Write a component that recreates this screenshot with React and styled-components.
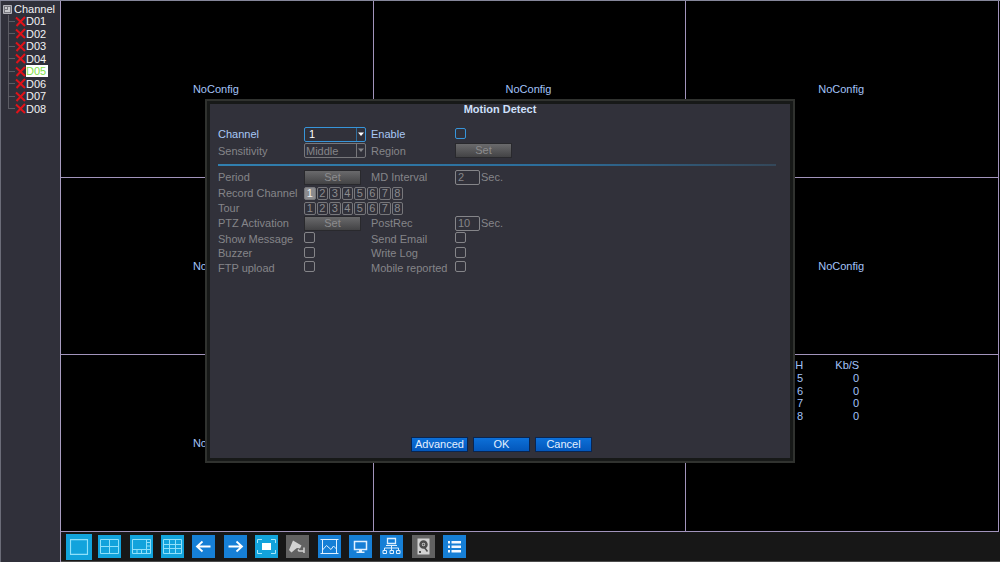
import { useState } from "react";
import styled, { createGlobalStyle } from "styled-components";

const GlobalStyle = createGlobalStyle`
  * {
    box-sizing: border-box;
  }

  body {
    margin: 0;
    background: #000;
    color: #a3c3f8;
    font-family: "Liberation Sans", Arial, sans-serif;
    font-size: 11px;
    line-height: 12px;
  }

  button,
  input,
  select {
    margin: 0;
    padding: 0;
    border: 0;
    background: none;
    color: inherit;
    font: inherit;
  }
`;

const Screen = styled.div`
  display: flex;
  min-height: 100vh;
  border-top: 1px solid #85869a;
`;

const Sidebar = styled.nav`
  flex: 0 0 60px;
  padding-top: 2px;
  border-left: 1px solid #6b6c78;
  background: #30303a;
  color: #f2f2f4;
`;

const TreeRoot = styled.div`
  display: flex;
  align-items: center;
  gap: 2px;
  padding-left: 2px;
`;

const Tree = styled.ul`
  display: grid;
  grid-auto-rows: 1fr;
  height: 100px;
  margin: 0;
  padding: 0 0 0 7px;
  list-style: none;
`;

const TreeItem = styled.li`
  display: flex;
  align-items: center;
`;

const Branch = styled.span`
  align-self: stretch;
  width: 7px;
  background:
    linear-gradient(#5c5c64, #5c5c64) left top / 1px
      ${(props) => (props.$last ? "50%" : "100%")} no-repeat,
    linear-gradient(#5c5c64, #5c5c64) left center / 100% 1px no-repeat;
`;

const CameraName = styled.button`
  height: 12px;
  padding-right: 2px;
  background: ${(props) => (props.$selected ? "#fff" : "none")};
  color: ${(props) => (props.$selected ? "#7fe04a" : "inherit")};
`;

const Main = styled.main`
  flex: 1;
  display: flex;
  flex-direction: column;
  border-left: 1px solid #a89cc0;
`;

const Wall = styled.div`
  flex: 1;
  display: grid;
  grid-template-columns: repeat(3, 1fr);
  grid-template-rows: repeat(3, 1fr);
  padding-right: 1px;
`;

const View = styled.div`
  display: grid;
  place-items: center;
  padding-right: 2px;
  border-right: 1px solid #a294bc;
  border-bottom: 1px solid #a294bc;
`;

const Rates = styled.table`
  place-self: start;
  height: 65px;
  margin: 2px 0 0 101px;
  border-collapse: collapse;
  text-align: right;

  th {
    height: 15px;
    font-weight: normal;
  }

  th,
  td {
    padding: 0;
  }

  th + th {
    width: 56px;
  }
`;

const Toolbar = styled.div`
  display: flex;
  height: 30px;
  padding-left: 2px;
  border-bottom: 1px solid #4b4b4b;
  background: #171717;
`;

const Tools = styled.div`
  display: grid;
  grid-template-columns: repeat(13, 1fr);
  width: 407px;
  place-items: center;
`;

const Tool = styled.button`
  width: ${(props) => (props.$active ? "26px" : "23px")};
  height: ${(props) => (props.$active ? "26px" : "23px")};
  background: ${(props) => props.$color};

  svg {
    display: block;
    width: 100%;
    height: 100%;
  }
`;

const Overlay = styled.div`
  position: fixed;
  inset: 0;
  display: grid;
  place-items: center;
`;

const Dialog = styled.section`
  display: flex;
  flex-direction: column;
  width: 59%;
  min-width: 400px;
  min-height: 364px;
  padding: 2px 0 9px;
  border: 2px solid #30322f;
  background: #31313a;
  box-shadow: inset 0 0 0 3px #171918;
`;

const Title = styled.h1`
  margin: 0 0 11px;
  color: #cfe0fb;
  font-size: 11px;
  font-weight: bold;
  line-height: 12px;
  text-align: center;
`;

const Form = styled.div`
  display: grid;
  grid-template-columns: 86px 67px 84px 1fr;
  grid-template-rows: ${(props) => props.$rows};
  align-items: center;
  justify-items: start;
  margin: 0 17px 0 11px;
  color: #858589;
  white-space: nowrap;
`;

const Label = styled.label`
  color: ${(props) => (props.$active ? "#a9c8f6" : "inherit")};
`;

const Divider = styled.hr`
  height: 2px;
  margin: 5px 17px 3px 11px;
  border: 0;
  background: linear-gradient(90deg, #3180b0, #2c6d9a 60%, #344759);
`;

const SelectBox = styled.span`
  display: flex;
  width: 62px;
  height: 15px;
  border: 1px solid ${(props) => (props.$active ? "#3795da" : "#77777b")};
  border-radius: 2px;
  color: ${(props) => (props.$active ? "#fff" : "inherit")};

  select {
    flex: 1;
    min-width: 0;
    padding-left: ${(props) => (props.$active ? "4px" : "1px")};
    appearance: none;
    opacity: 1;
  }

  svg {
    width: 9px;
    height: 13px;
    border-left: 1px solid ${(props) => (props.$active ? "#2f6d9c" : "#77777b")};
    pointer-events: none;
  }
`;

const CheckBox = styled.input`
  && {
    width: 11px;
    height: 11px;
    margin-bottom: 2px;
    border: 1px solid ${(props) => (props.$active ? "#3795da" : "#858589")};
    border-radius: 2px;
    appearance: none;
  }

  &:checked {
    background: #2f86c4;
  }
`;

const SetButton = styled.button`
  width: 57px;
  height: 15px;
  border: 1px solid #29292d;
  background: linear-gradient(#6a6a6c, #434345);
  color: #8c8c8e;
  line-height: 13px;
`;

const NumberField = styled.span`
  display: flex;
  align-items: center;
  gap: 1px;

  input {
    width: 25px;
    height: 15px;
    padding-left: 2px;
    border: 1px solid #858589;
    border-radius: 2px;
  }
`;

const ChannelKeys = styled.div`
  grid-column: span 3;
  display: grid;
  grid-template-columns: repeat(8, 1fr);
  gap: 1px;
  width: 99px;
`;

const ChannelKey = styled.button`
  height: 13px;
  border: 1px solid #77777b;
  border-radius: 2px;
  background: ${(props) => (props.$on ? "#8b8b8e" : "none")};
  color: ${(props) => (props.$on ? "#f0f0f0" : "#8b8b8e")};
  line-height: 11px;
`;

const Footer = styled.footer`
  display: flex;
  justify-content: center;
  gap: 5px;
  margin-top: auto;
  padding-left: 3px;
`;

const ActionButton = styled.button`
  width: 57px;
  height: 15px;
  border: 1px solid #0a2550;
  background: linear-gradient(#0d70d8, #0357bb);
  color: #e4f0ff;
  line-height: 13px;
`;

const cameras = ["D01", "D02", "D03", "D04", "D05", "D06", "D07", "D08"];
const channels = [1, 2, 3, 4, 5, 6, 7, 8];
const rates = [5, 6, 7, 8];

// views 5 and 8 carry no caption
const views = channels.map((n) => ({
  id: n,
  caption: n === 5 || n === 8 ? "" : "NoConfig",
}));

const CYAN = "#12a3dc";
const BLUE = "#167fd6";
const GREY = "#626262";

const tools = [
  {
    name: "Single view",
    color: CYAN,
    icon: <path d="M4 5h15v13H4z" stroke="#8fe0fa" />,
  },
  {
    name: "Four views",
    color: CYAN,
    icon: <path d="M2.5 4.5h18v14h-18zM11.5 4.5v14M2.5 11.5h18" stroke="#8fe0fa" />,
  },
  {
    name: "Eight views",
    color: CYAN,
    icon: (
      <path
        d="M2.5 4.5h18v14h-18zM16.5 4.5v14M2.5 14.5h18M16.5 7.5h4M16.5 11h4M7 14.5v4M11.5 14.5v4"
        stroke="#8fe0fa"
      />
    ),
  },
  {
    name: "Nine views",
    color: CYAN,
    icon: (
      <path
        d="M2.5 4.5h18v14h-18zM8.5 4.5v14M14.5 4.5v14M2.5 9.5h18M2.5 13.5h18"
        stroke="#8fe0fa"
      />
    ),
  },
  {
    name: "Previous",
    color: BLUE,
    icon: <path d="M18.5 11.5H5M10.5 6.5l-5.5 5 5.5 5" stroke="#fff" strokeWidth="1.8" />,
  },
  {
    name: "Next",
    color: BLUE,
    icon: <path d="M4.5 11.5H18M12.5 6.5l5.5 5-5.5 5" stroke="#fff" strokeWidth="1.8" />,
  },
  {
    name: "Full screen",
    color: CYAN,
    icon: (
      <>
        <path
          d="M2.5 8V4.500H7M16 4.500h4.500V8M20.500 15v3.500H16M7 18.500H2.500V15"
          stroke="#a5e7fb"
        />
        <path d="M7 8h9v7H7z" fill="#fff" />
      </>
    ),
  },
  {
    name: "PTZ",
    color: GREY,
    icon: (
      <>
        <path d="M7 5.500l8.500 5-1.500 3-3-.5-2 1.500-3.500 3L3 15z" fill="#d2d2d2" />
        <path d="M12 14.500l1 1.500h4.500M18 12.500v5.500" stroke="#d2d2d2" strokeWidth="1.500" />
      </>
    ),
  },
  {
    name: "Image color",
    color: BLUE,
    icon: (
      <path
        d="M2.500 4.500h18M2.500 18.500h18M4.500 4.500v14M18.500 4.500v14M4.500 15l4-4.500 4.500 4 2.500-3.500 3 3"
        stroke="#dff0ff"
      />
    ),
  },
  {
    name: "Output",
    color: BLUE,
    icon: (
      <>
        <path d="M5.500 6.500h12v8h-12z" stroke="#dff0ff" strokeWidth="1.500" />
        <path d="M10 15h3v1.500h2.500V18h-8v-1.500H10z" fill="#dff0ff" />
      </>
    ),
  },
  {
    name: "Network",
    color: BLUE,
    icon: (
      <>
        <path d="M7.500 3.500h8v5h-8z" stroke="#dff0ff" strokeWidth="1.300" />
        <path d="M6 10.500h11M11.500 11v4M4.500 15.500v-2.500h14v2.500" stroke="#dff0ff" />
        <path
          d="M3 15.500h3.500v3H3zM10 15.500h3.500v3H10zM16.500 15.500H20v3h-3.500z"
          stroke="#dff0ff"
        />
      </>
    ),
  },
  {
    name: "Disk",
    color: GREY,
    icon: (
      <>
        <path d="M5.500 3.500h12v16h-12z" fill="#d2d2d2" />
        <circle cx="11.500" cy="9.500" r="3" stroke="#4c4c4c" strokeWidth="2.500" />
        <circle cx="11.500" cy="9.500" r="1" fill="#4c4c4c" />
        <path d="M12 12l3.500 4.500" stroke="#4c4c4c" strokeWidth="1.500" />
        <path d="M7 16h2v2H7z" fill="#4c4c4c" />
      </>
    ),
  },
  {
    name: "Main menu",
    color: BLUE,
    icon: (
      <path
        d="M5 6h2v2.500H5zM8.500 6H18v2.500H8.500zM5 10.500h2V13H5zM8.500 10.500H18V13H8.500zM5 15h2v2.500H5zM8.500 15H18v2.500H8.500z"
        fill="#f2f8ff"
      />
    ),
  },
];

function Select({ id, options, active }) {
  return (
    <SelectBox $active={active}>
      <select id={id} disabled={!active}>
        {options.map((option) => (
          <option key={option}>{option}</option>
        ))}
      </select>
      <svg viewBox="0 0 8 13" aria-hidden="true">
        <path d="M1 4.500h6L4 8z" fill="currentColor" />
      </svg>
    </SelectBox>
  );
}

function Check({ id, label }) {
  return (
    <>
      <Label htmlFor={id}>{label}</Label>
      <CheckBox id={id} type="checkbox" disabled />
    </>
  );
}

function Seconds({ id, label, value }) {
  return (
    <>
      <Label htmlFor={id}>{label}</Label>
      <NumberField>
        <input id={id} type="text" defaultValue={value} disabled />
        Sec.
      </NumberField>
    </>
  );
}

function Keys({ label, on }) {
  return (
    <>
      <span>{label}</span>
      <ChannelKeys role="group" aria-label={label}>
        {channels.map((n) => (
          <ChannelKey key={n} $on={n === on} aria-pressed={n === on} disabled>
            {n}
          </ChannelKey>
        ))}
      </ChannelKeys>
    </>
  );
}

function MotionDetect() {
  return (
    <Dialog role="dialog" aria-labelledby="title">
      <Title id="title">Motion Detect</Title>
      <Form $rows="16px 17px">
        <Label htmlFor="channel" $active>
          Channel
        </Label>
        <Select id="channel" options={channels} active />
        <Label htmlFor="enable" $active>
          Enable
        </Label>
        <CheckBox id="enable" type="checkbox" $active />

        <Label htmlFor="sensitivity">Sensitivity</Label>
        <Select id="sensitivity" options={["Middle"]} />
        <Label htmlFor="region">Region</Label>
        <SetButton id="region" disabled>
          Set
        </SetButton>
      </Form>
      <Divider />
      <Form $rows="16px 16px 14px 16px 15px 14px 15px">
        <Label htmlFor="period">Period</Label>
        <SetButton id="period" disabled>
          Set
        </SetButton>
        <Seconds id="interval" label="MD Interval" value="2" />

        <Keys label="Record Channel" on={1} />
        <Keys label="Tour" />

        <Label htmlFor="ptz">PTZ Activation</Label>
        <SetButton id="ptz" disabled>
          Set
        </SetButton>
        <Seconds id="postrec" label="PostRec" value="10" />

        <Check id="message" label="Show Message" />
        <Check id="email" label="Send Email" />
        <Check id="buzzer" label="Buzzer" />
        <Check id="log" label="Write Log" />
        <Check id="ftp" label="FTP upload" />
        <Check id="mobile" label="Mobile reported" />
      </Form>
      <Footer>
        <ActionButton>Advanced</ActionButton>
        <ActionButton>OK</ActionButton>
        <ActionButton>Cancel</ActionButton>
      </Footer>
    </Dialog>
  );
}

export default function App() {
  const [selected, setSelected] = useState("D05");

  return (
    <>
      <GlobalStyle />
      <Screen>
        <Sidebar>
          <TreeRoot>
            <svg width="9" height="9" viewBox="0 0 9 9" aria-hidden="true">
              <path d="M.5.5h8v8h-8z" fill="#77777e" stroke="#b4b4ba" />
              <path d="M2 2h2v2H2zM5 2h2v5H2V5h3z" fill="#c8c8cc" />
            </svg>
            Channel
          </TreeRoot>
          <Tree>
            {cameras.map((name, i) => (
              <TreeItem key={name}>
                <Branch $last={i === cameras.length - 1} />
                <svg width="11" height="11" viewBox="0 0 11 11" aria-hidden="true">
                  <path d="M1 1.500l9 8.500M10 1L1.500 10" stroke="#e01219" strokeWidth="2" />
                </svg>
                <CameraName
                  $selected={name === selected}
                  onClick={() => setSelected(name)}
                >
                  {name}
                </CameraName>
              </TreeItem>
            ))}
          </Tree>
        </Sidebar>
        <Main>
          <Wall>
            {views.map((view) => (
              <View key={view.id}>{view.caption}</View>
            ))}
            <View>
              <Rates>
                <thead>
                  <tr>
                    <th>CH</th>
                    <th>Kb/S</th>
                  </tr>
                </thead>
                <tbody>
                  {rates.map((n) => (
                    <tr key={n}>
                      <td>{n}</td>
                      <td>0</td>
                    </tr>
                  ))}
                </tbody>
              </Rates>
            </View>
          </Wall>
          <Toolbar>
            <Tools>
              {tools.map((tool, i) => (
                <Tool
                  key={tool.name}
                  aria-label={tool.name}
                  $active={i === 0}
                  $color={tool.color}
                >
                  <svg viewBox="0 0 23 23" fill="none">
                    {tool.icon}
                  </svg>
                </Tool>
              ))}
            </Tools>
          </Toolbar>
        </Main>
      </Screen>
      <Overlay>
        <MotionDetect />
      </Overlay>
    </>
  );
}
